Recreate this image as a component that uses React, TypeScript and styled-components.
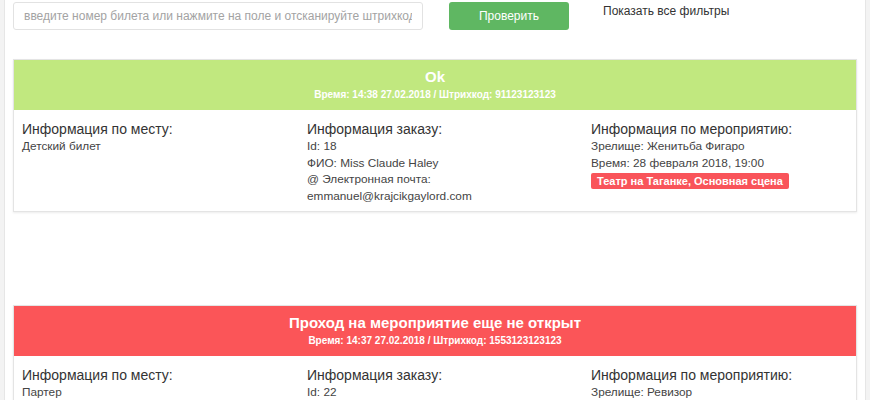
import React from "react";
import styled, { createGlobalStyle } from "styled-components";

const GlobalStyle = createGlobalStyle`
  html, body {
    margin: 0;
    padding: 0;
    background: #f3f3f3;
    font-family: "Liberation Sans", Arial, sans-serif;
  }
`;

const Page = styled.div`
  margin: 0 4px;
  min-height: 400px;
  background: #fff;
  border-left: 1px solid #e6e6e6;
  border-right: 1px solid #e6e6e6;
  padding: 2px 8px 0 8px;
`;

const SearchBar = styled.div`
  display: flex;
  align-items: flex-start;
  height: 57px;
`;

const Input = styled.input`
  box-sizing: border-box;
  width: 410px;
  height: 28px;
  border: 1px solid #e2e2e2;
  border-radius: 3px;
  padding: 0 10px;
  font-family: inherit;
  font-size: 12px;
  color: #555;
  outline: none;
  &::placeholder {
    color: #a3a3a3;
  }
`;

const CheckButton = styled.button`
  box-sizing: border-box;
  margin-left: 26px;
  width: 120px;
  height: 28px;
  border: none;
  border-radius: 3px;
  background: #5fb762;
  color: #fff;
  font-family: inherit;
  font-size: 12px;
`;

const FiltersLink = styled.span`
  margin-left: 34px;
  margin-top: 2px;
  font-size: 12px;
  color: #333;
`;

const Card = styled.div<{ $gap?: number }>`
  margin-top: ${(p) => p.$gap ?? 0}px;
  border: 1px solid #e4e4e4;
  box-shadow: 0 1px 2px rgba(0, 0, 0, 0.08);
  background: #fff;
`;

const CardHeader = styled.div<{ $tone: "ok" | "error" }>`
  height: 50px;
  box-sizing: border-box;
  padding-top: 8px;
  background: ${(p) => (p.$tone === "ok" ? "#c1e87f" : "#fb5558")};
  color: #fff;
  text-align: center;
`;

const Title = styled.div`
  font-size: 15px;
  font-weight: bold;
  line-height: 18px;
`;

const Subtitle = styled.div`
  font-size: 10px;
  font-weight: bold;
  line-height: 14px;
  margin-top: 2px;
`;

const CardBody = styled.div`
  display: grid;
  grid-template-columns: 285px 284px 1fr;
  padding: 10px 8px 7px 8px;
`;

const Column = styled.div`
  color: #444;
`;

const ColumnTitle = styled.div`
  font-size: 14px;
  color: #333;
  line-height: 18px;
`;

const Line = styled.div`
  font-size: 11.8px;
  line-height: 16.6px;
`;

const Badge = styled.span`
  display: inline-block;
  margin-top: 1px;
  padding: 0 6px;
  background: #f9545a;
  color: #fff;
  font-size: 11px;
  font-weight: bold;
  line-height: 16px;
  border-radius: 2px;
`;

interface TicketProps {
  tone: "ok" | "error";
  title: string;
  time: string;
  barcode: string;
  place: string[];
  order: string[];
  event: string[];
  venue?: string;
  gap?: number;
}

const Ticket: React.FC<TicketProps> = ({ tone, title, time, barcode, place, order, event, venue, gap }) => (
  <Card $gap={gap}>
    <CardHeader $tone={tone}>
      <Title>{title}</Title>
      <Subtitle>
        Время: {time} / Штрихкод: {barcode}
      </Subtitle>
    </CardHeader>
    <CardBody>
      <Column>
        <ColumnTitle>Информация по месту:</ColumnTitle>
        {place.map((l) => (
          <Line key={l}>{l}</Line>
        ))}
      </Column>
      <Column>
        <ColumnTitle>Информация заказу:</ColumnTitle>
        {order.map((l) => (
          <Line key={l}>{l}</Line>
        ))}
      </Column>
      <Column>
        <ColumnTitle>Информация по мероприятию:</ColumnTitle>
        {event.map((l) => (
          <Line key={l}>{l}</Line>
        ))}
        {venue && <Badge>{venue}</Badge>}
      </Column>
    </CardBody>
  </Card>
);

export default function App() {
  return (
    <>
      <GlobalStyle />
      <Page>
        <SearchBar>
          <Input placeholder="введите номер билета или нажмите на поле и отсканируйте штрихкод" />
          <CheckButton>Проверить</CheckButton>
          <FiltersLink>Показать все фильтры</FiltersLink>
        </SearchBar>
        <Ticket
          tone="ok"
          title="Ok"
          time="14:38 27.02.2018"
          barcode="91123123123"
          place={["Детский билет"]}
          order={["Id: 18", "ФИО: Miss Claude Haley", "@ Электронная почта:", "emmanuel@krajcikgaylord.com"]}
          event={["Зрелище: Женитьба Фигаро", "Время: 28 февраля 2018, 19:00"]}
          venue="Театр на Таганке, Основная сцена"
        />
        <Ticket
          gap={93}
          tone="error"
          title="Проход на мероприятие еще не открыт"
          time="14:37 27.02.2018"
          barcode="1553123123123"
          place={["Партер"]}
          order={["Id: 22", "ФИО: Mr. John Doe"]}
          event={["Зрелище: Ревизор", "Время: 28 февраля 2018, 19:00"]}
        />
      </Page>
    </>
  );
}
